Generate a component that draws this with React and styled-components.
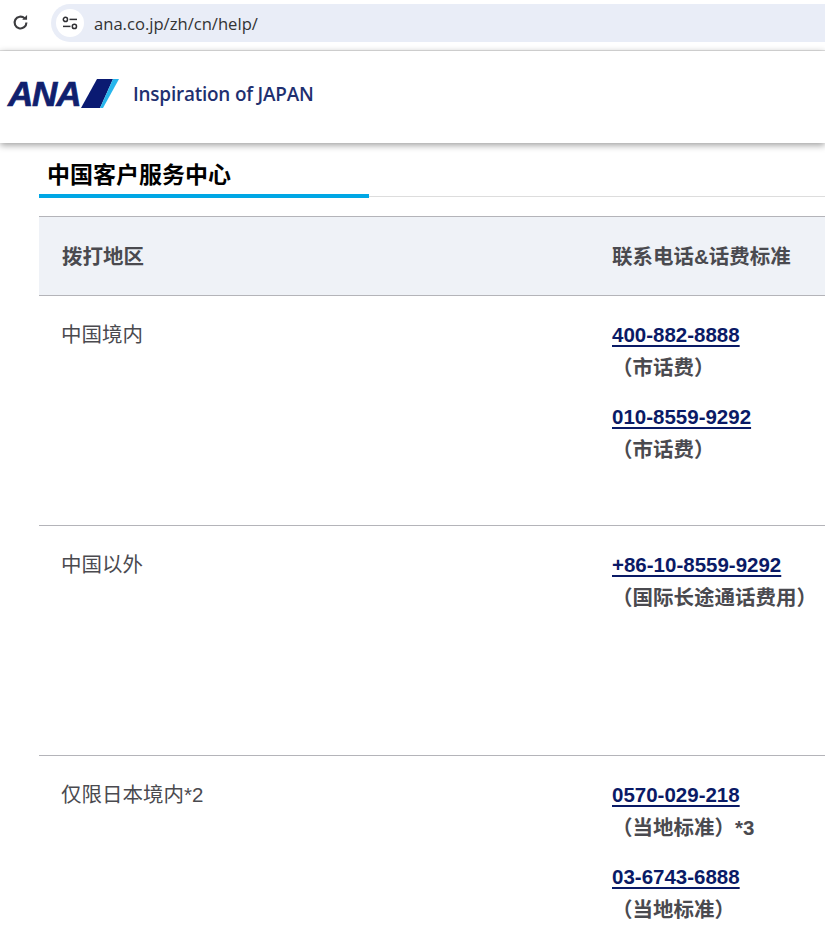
import React from 'react';
import styled, { createGlobalStyle } from 'styled-components';

const Global = createGlobalStyle`
  html, body {
    margin: 0;
    padding: 0;
    background: #fff;
    overflow: hidden;
  }
  body {
    width: 825px;
    height: 945px;
    font-family: "Liberation Sans", "Noto Sans CJK SC", sans-serif;
  }
`;

const BrowserBar = styled.div`
  height: 51px;
  box-sizing: border-box;
  border-bottom: 1px solid #e4e4e4;
  display: flex;
  align-items: flex-start;
  padding: 4px 0 0 11px;
  gap: 21px;
`;

const ReloadIcon = styled.svg`
  width: 19px;
  height: 19px;
  margin-top: 9px;
  flex: none;
`;

const AddressPill = styled.div`
  flex: 1;
  height: 38px;
  background: #e9edf7;
  border-radius: 19px 0 0 19px;
  display: flex;
  align-items: center;
  padding-left: 5px;
  gap: 10px;
`;

const SiteIcon = styled.div`
  width: 28px;
  height: 28px;
  border-radius: 50%;
  background: #fff;
  display: flex;
  align-items: center;
  justify-content: center;
`;

const Url = styled.span`
  font-family: "Open Sans", sans-serif;
  font-size: 16.6px;
  color: #333;
`;

const SiteHeader = styled.header`
  height: 92px;
  box-sizing: border-box;
  background: #fff;
  box-shadow: 0 2px 7px rgba(0, 0, 0, 0.4);
  position: relative;
  display: flex;
  align-items: center;
  padding: 0 0 7px 8px;
`;

const LogoMark = styled.div`
  display: flex;
  align-items: flex-end;
  width: 125px;
  flex: none;
`;

const LogoText = styled.span`
  font-family: "Liberation Sans", sans-serif;
  font-weight: 700;
  font-style: italic;
  font-size: 35px;
  line-height: 29px;
  letter-spacing: -1.2px;
  color: #10206e;
  -webkit-text-stroke: 0.7px #10206e;
`;

const LogoTail = styled.svg`
  width: 40px;
  height: 29px;
  flex: none;
`;

const Tagline = styled.span`
  font-family: "Open Sans", sans-serif;
  font-weight: 600;
  font-size: 18.9px;
  letter-spacing: -0.2px;
  color: #1f3070;
`;

const Content = styled.main`
  margin-left: 39px;
`;

const TitleBar = styled.div`
  height: 54px;
  box-sizing: border-box;
  border-bottom: 1px solid #ddd;
  display: flex;
  margin-bottom: 19px;
`;

const Title = styled.h2`
  margin: 0 0 -2px;
  width: 330px;
  height: 55px;
  box-sizing: border-box;
  border-bottom: 4px solid #00a7e5;
  padding: 15px 0 0 8px;
  font-size: 23px;
  line-height: 34px;
  font-weight: 700;
  color: #000;
`;

const Row = styled.div`
  display: grid;
  grid-template-columns: 550px 1fr;
  box-sizing: border-box;
  height: ${p => (p.$head ? '79px' : '230px')};
  border-top: 1px solid #b4b4b9;
  background: ${p => (p.$head ? '#eff2f7' : '#fff')};
  color: #4a4a4f;
  font-size: 20.5px;
  line-height: 32px;
`;

const HeadCell = styled.div`
  padding: 24px 0 0 23px;
  font-weight: 700;
`;

const Cell = styled.div`
  padding: 23px 0 0 23px;
`;

const AreaCell = styled(Cell)`
  padding-left: 22px;
`;

const Contact = styled.div`
  margin-bottom: 17px;
`;

const Phone = styled.a`
  display: block;
  width: fit-content;
  color: #0a1a66;
  font-weight: 700;
  text-decoration: underline;
  text-decoration-thickness: 2px;
  text-underline-offset: 3px;
`;

const Rate = styled.div`
  margin-top: 1px;
  font-weight: 700;
`;

const contacts = [
  {
    area: '中国境内',
    items: [
      { tel: '400-882-8888', rate: '（市话费）' },
      { tel: '010-8559-9292', rate: '（市话费）' },
    ],
  },
  {
    area: '中国以外',
    items: [{ tel: '+86-10-8559-9292', rate: '（国际长途通话费用）' }],
  },
  {
    area: '仅限日本境内*2',
    items: [
      { tel: '0570-029-218', rate: '（当地标准）*3' },
      { tel: '03-6743-6888', rate: '（当地标准）' },
    ],
  },
];

export default function App() {
  return (
    <>
      <Global />
      <BrowserBar>
        <ReloadIcon viewBox="0 0 18 18" fill="none">
          <path d="M14.6 9a5.6 5.6 0 1 1-1.7-4" stroke="#3c3c3f" strokeWidth="2" />
          <path d="M15.2 1.9v4.6h-4.6z" fill="#3c3c3f" />
        </ReloadIcon>
        <AddressPill>
          <SiteIcon>
            <svg width="16" height="14" viewBox="0 0 16 14" fill="none" stroke="#2f2f33" strokeWidth="1.5">
              <circle cx="3.4" cy="3.4" r="2.1" />
              <path d="M7.5 3.4h7.5" />
              <path d="M1 10.4h7.5" />
              <circle cx="12.4" cy="10.4" r="2.1" />
            </svg>
          </SiteIcon>
          <Url>ana.co.jp/zh/cn/help/</Url>
        </AddressPill>
      </BrowserBar>
      <SiteHeader>
        <LogoMark>
          <LogoText>ANA</LogoText>
          <LogoTail viewBox="0 0 40 29">
            <path d="M17 0h16L20 29H1z" fill="#0a1a72" />
            <path d="M33 0h6L23 29h-3z" fill="#27b5ec" />
          </LogoTail>
        </LogoMark>
        <Tagline>Inspiration of JAPAN</Tagline>
      </SiteHeader>
      <Content>
        <TitleBar>
          <Title>中国客户服务中心</Title>
        </TitleBar>
        <Row $head>
          <HeadCell>拨打地区</HeadCell>
          <HeadCell>联系电话&amp;话费标准</HeadCell>
        </Row>
        {contacts.map(row => (
          <Row key={row.area}>
            <AreaCell>{row.area}</AreaCell>
            <Cell>
              {row.items.map(item => (
                <Contact key={item.tel}>
                  <Phone href="#">{item.tel}</Phone>
                  <Rate>{item.rate}</Rate>
                </Contact>
              ))}
            </Cell>
          </Row>
        ))}
      </Content>
    </>
  );
}
